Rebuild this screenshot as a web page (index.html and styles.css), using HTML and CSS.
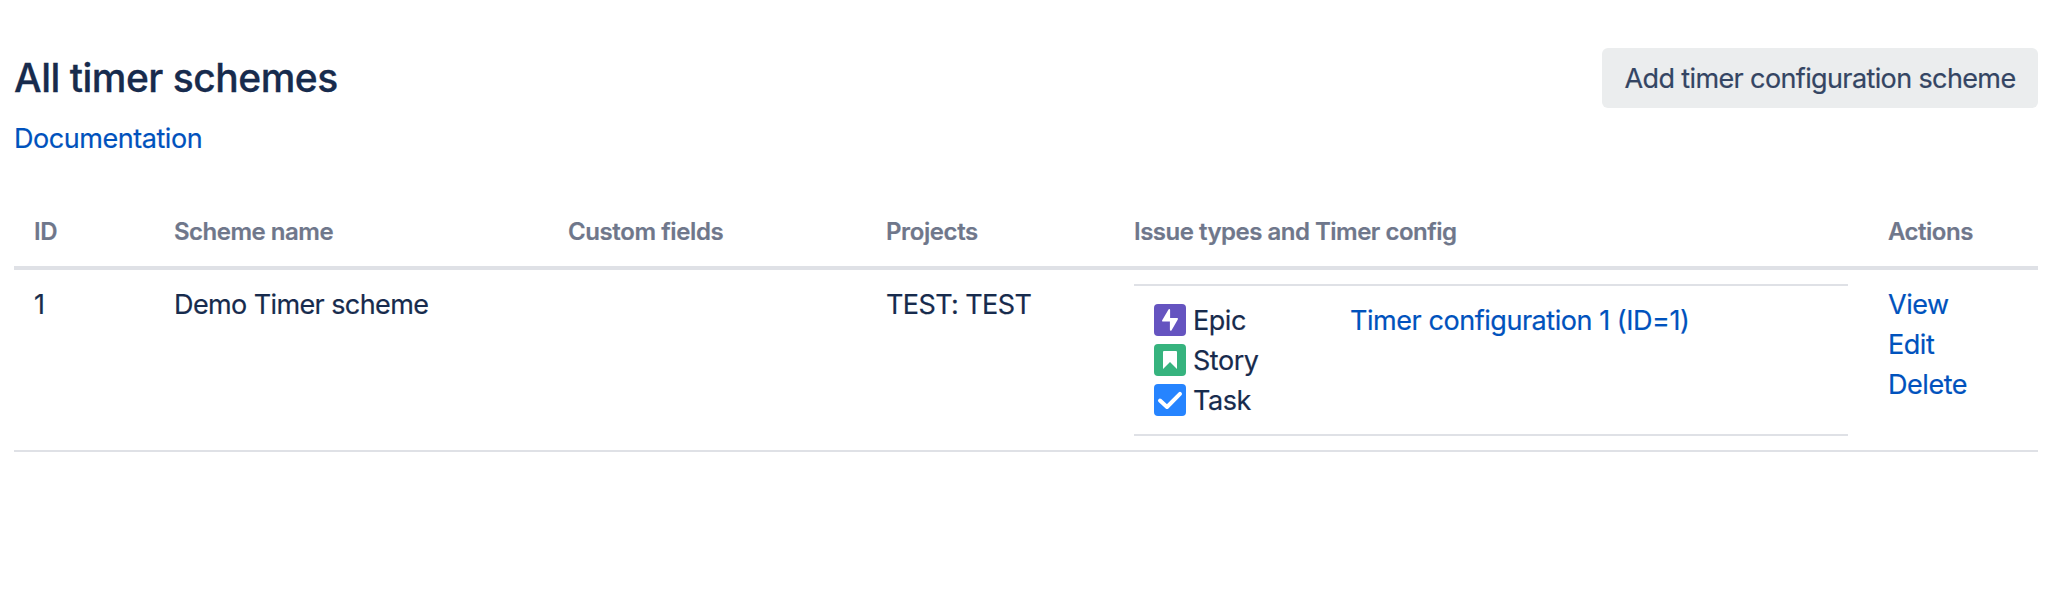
FILE: index.html
```html
<!DOCTYPE html>
<html lang="en">
<head>
<meta charset="utf-8">
<title>All timer schemes</title>
<link rel="stylesheet" href="styles.css">
</head>
<body>
<main class="page">
  <header class="page-header">
    <h1 class="title">All timer schemes</h1>
    <button class="button" type="button">Add timer configuration scheme</button>
  </header>
  <a class="link doc-link" href="#">Documentation</a>
  <table class="schemes">
    <colgroup>
      <col class="col-id"><col class="col-name"><col class="col-fields"><col class="col-projects"><col class="col-types"><col class="col-actions">
    </colgroup>
    <thead>
      <tr>
        <th>ID</th>
        <th>Scheme name</th>
        <th class="th-fields">Custom fields</th>
        <th class="th-fields">Projects</th>
        <th>Issue types and Timer config</th>
        <th>Actions</th>
      </tr>
    </thead>
    <tbody>
      <tr>
        <td>1</td>
        <td class="td-name">Demo Timer scheme</td>
        <td></td>
        <td class="td-project">TEST: TEST</td>
        <td class="td-types">
          <div class="config">
            <ul class="types">
              <li class="type">
                <svg class="icon" viewBox="0 0 32 32"><rect width="32" height="32" rx="4" fill="#6554c0"/><path d="M14.500 5.400 8.200 16.200c-.4.8 0 1.300.8 1.300h6.900v8.200c0 1.200 1.200 1.300 1.700.5l6.200-10.800c.4-.8 0-1.400-.8-1.400h-6.900V5.900c0-1.200-1.100-1.300-1.600-.5z" fill="#fff"/></svg>
                <span class="type-name">Epic</span>
              </li>
              <li class="type">
                <svg class="icon" viewBox="0 0 32 32"><rect width="32" height="32" rx="4" fill="#36b37e"/><path d="M10 7h12a1 1 0 0 1 1 1v17l-7-7-7 7V8a1 1 0 0 1 1-1z" fill="#fff"/></svg>
                <span class="type-name">Story</span>
              </li>
              <li class="type">
                <svg class="icon" viewBox="0 0 32 32"><rect width="32" height="32" rx="4" fill="#2684ff"/><path d="M6 16.500l7 6.500L26 9.800" fill="none" stroke="#fff" stroke-width="4" stroke-linecap="round" stroke-linejoin="round"/></svg>
                <span class="type-name">Task</span>
              </li>
            </ul>
            <a class="link config-link" href="#">Timer configuration 1 (ID=1)</a>
          </div>
        </td>
        <td>
          <nav class="actions">
            <a class="link" href="#">View</a>
            <a class="link" href="#">Edit</a>
            <a class="link" href="#">Delete</a>
          </nav>
        </td>
      </tr>
    </tbody>
  </table>
</main>
</body>
</html>
```
FILE: styles.css
```css
* { box-sizing: border-box; }
body {
  margin: 0;
  background: #fff;
  color: #172b4d;
  font-family: Inter, "Liberation Sans", sans-serif;
  font-size: 27px;
  line-height: 40px;
  letter-spacing: -0.45px;
  -webkit-text-stroke: 0.2px;
}
.page { padding: 48px 28px 0 14px; }
.page-header {
  display: flex;
  align-items: center;
  justify-content: space-between;
  height: 60px;
}
.title {
  margin: 0;
  font-size: 39px;
  font-weight: 500;
  line-height: 60px;
  letter-spacing: -0.5px;
  -webkit-text-stroke: 0.3px;
}
.button {
  width: 436px;
  height: 60px;
  padding: 2px 0 0;
  border: 0;
  border-radius: 6px;
  background: #ebedee;
  color: #344563;
  font: inherit;
  letter-spacing: -0.62px;
  white-space: nowrap;
}
.link { color: #0052bd; text-decoration: none; }
.doc-link { display: block; width: max-content; margin-top: 11px; }
.schemes {
  width: 100%;
  margin-top: 43px;
  border-collapse: separate;
  border-spacing: 0;
  table-layout: fixed;
}
.col-id { width: 140px; }
.col-name { width: 394px; }
.col-fields { width: 318px; }
.col-projects { width: 248px; }
.col-types { width: 754px; }
.col-actions { width: 170px; }
th {
  height: 68px;
  padding: 0 20px 4px;
  border-bottom: 4px solid #dfe1e6;
  color: #6f778b;
  font-size: 24px;
  font-weight: 600;
  letter-spacing: -0.5px;
  text-align: left;
  white-space: nowrap;
}
.th-fields { letter-spacing: -0.4px; }
td {
  padding: 15px 20px 0;
  border-bottom: 2px solid #dfe1e6;
  vertical-align: top;
  white-space: nowrap;
}
.td-name { letter-spacing: -0.6px; }
.td-project { letter-spacing: -0.6px; }
.td-types { padding: 14px 20px; }
.config {
  display: flex;
  padding: 14px 20px;
  border-top: 2px solid #dfe1e6;
  border-bottom: 2px solid #dfe1e6;
}
.types {
  width: 196px;
  margin: 0;
  padding: 0;
  list-style: none;
}
.type { display: flex; align-items: center; gap: 7px; height: 40px; }
.type-name { padding-top: 2px; }
.icon { width: 32px; height: 32px; }
.config-link { padding-top: 1px; }
.actions { display: flex; flex-direction: column; align-items: flex-start; }
```
